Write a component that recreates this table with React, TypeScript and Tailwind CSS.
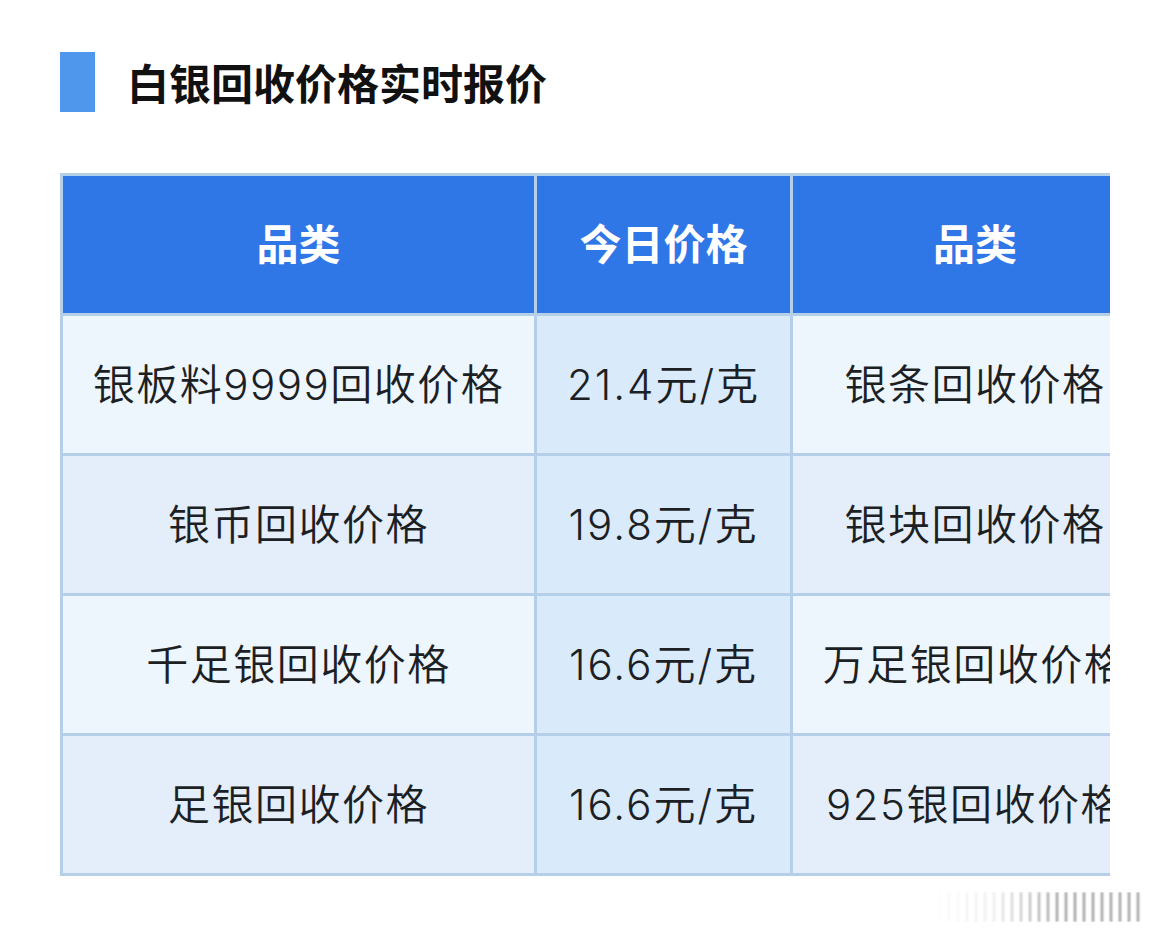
const rows = [
  { a: "银板料9999回收价格", p: "21.4元/克", b: "银条回收价格" },
  { a: "银币回收价格", p: "19.8元/克", b: "银块回收价格" },
  { a: "千足银回收价格", p: "16.6元/克", b: "万足银回收价格" },
  { a: "足银回收价格", p: "16.6元/克", b: "925银回收价格" },
];

export default function App() {
  return (
    <div
      className="w-[1169px] h-[945px] bg-white pl-[60px] pt-[52px] text-[#1c1f24]"
      style={{ fontFamily: '"Noto Sans CJK SC", "Noto Sans", sans-serif' }}
    >
      <div className="flex items-center">
        <div className="w-[35px] h-[60px] bg-[#4f97ec]" />
        <h1 className="ml-[32px] text-[42px] leading-none font-bold text-[#111]">
          白银回收价格实时报价
        </h1>
      </div>

      <div className="mt-[61px] w-[1050px] overflow-hidden">
        <div
          className="w-[1100px] grid grid-cols-[471px_253px_364px] auto-rows-[137px] gap-[3px] p-[3px] bg-[#b5cfe9]"
          style={{ fontFamily: 'Inter, "Noto Sans CJK SC", sans-serif' }}
        >
          <div className="bg-[#2f76e6] flex items-center justify-center text-white text-[42px] font-bold">
            品类
          </div>
          <div className="bg-[#2f76e6] flex items-center justify-center text-white text-[42px] font-bold">
            今日价格
          </div>
          <div className="bg-[#2f76e6] flex items-center justify-center text-white text-[42px] font-bold">
            品类
          </div>
          {rows.map((r, i) => {
            const side = i % 2 === 0 ? "bg-[#edf5fd]" : "bg-[#e3eefa]";
            return [
              <div key={`a${i}`} className={`${side} flex items-center justify-center text-[42px] font-[350] tracking-[1.5px]`}>
                {r.a}
              </div>,
              <div key={`p${i}`} className="bg-[#d9eafb] flex items-center justify-center text-[42px] font-[350] tracking-[2px]">
                {r.p}
              </div>,
              <div key={`b${i}`} className={`${side} flex items-center justify-center text-[42px] font-[350] tracking-[1.5px] whitespace-nowrap`}>
                {r.b}
              </div>,
            ];
          })}
        </div>
      </div>

      <div className="mt-[16px] ml-[870px] w-[215px] h-[30px] relative">
        <div className="absolute inset-0 bg-[repeating-linear-gradient(90deg,rgba(0,0,0,0.45)_0px,rgba(0,0,0,0.45)_2px,transparent_2px,transparent_9px)] blur-[1px] [mask-image:linear-gradient(90deg,transparent_0%,rgba(0,0,0,0.2)_30%,black_60%,black_100%)]" />
      </div>
    </div>
  );
}
